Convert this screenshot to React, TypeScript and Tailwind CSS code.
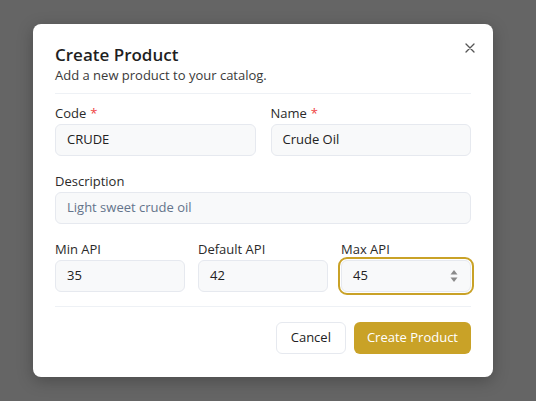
const field = 'h-8 rounded-md border border-[#e6e9ef] bg-[#f8f9fa] px-[11px] flex items-center text-[13px] text-[#222]';

function Label({ text, required }: { text: string; required?: boolean }) {
  return (
    <div className="h-[18px] leading-[18px] text-[13px] text-[#2a2a2a] mb-[2px]">
      {text}
      {required && <span className="text-[#ef4444] ml-1">*</span>}
    </div>
  );
}

export default function App() {
  return (
    <div
      className="w-[536px] h-[401px] bg-[#656565] pt-[24px] pl-[33px]"
      style={{ fontFamily: '"Open Sans", "Noto Sans", sans-serif' }}
    >
      <div className="relative w-[460px] h-[353px] rounded-lg bg-white shadow-[0_4px_16px_rgba(0,0,0,0.25)] px-[22px] pt-[20px]">
        <button className="absolute right-[13px] top-[14px] w-5 h-5 flex items-center justify-center text-[#555]">
          <svg width="10" height="10" viewBox="0 0 10 10" stroke="currentColor" strokeWidth="1.3" strokeLinecap="round">
            <path d="M1 1L9 9M9 1L1 9" />
          </svg>
        </button>

        <div className="pb-[9px] border-b border-[#eef1f5]">
          <h2 className="text-[17px] leading-[22px] font-semibold text-[#1f1f1f]">Create Product</h2>
          <p className="text-[13px] leading-[18px] text-[#3a3a3a]">Add a new product to your catalog.</p>
        </div>

        <div className="pt-[10px] pb-[14px] border-b border-[#eef1f5] flex flex-col gap-4">
          <div className="grid grid-cols-2 gap-[15px]">
            <div>
              <Label text="Code" required />
              <div className={field}>CRUDE</div>
            </div>
            <div>
              <Label text="Name" required />
              <div className={field}>Crude Oil</div>
            </div>
          </div>
          <div>
            <Label text="Description" />
            <div className={`${field} text-[#64748b]`}>Light sweet crude oil</div>
          </div>
          <div className="grid grid-cols-3 gap-[13px]">
            <div>
              <Label text="Min API" />
              <div className={field}>35</div>
            </div>
            <div>
              <Label text="Default API" />
              <div className={field}>42</div>
            </div>
            <div>
              <Label text="Max API" />
              <div className={`${field} justify-between pr-[12px] outline-2 outline-offset-[1px] outline-[#c9a227] outline`}>
                <span>45</span>
                <svg width="8" height="14" viewBox="0 0 8 14" fill="#8a8a8a">
                  <path d="M4 1L7.5 5.5H0.5Z" />
                  <path d="M4 13L7.5 8.5H0.5Z" />
                </svg>
              </div>
            </div>
          </div>
        </div>

        <div className="pt-[15px] flex justify-end gap-2">
          <button className="h-8 px-[14px] rounded-md border border-[#e6e9ef] bg-white text-[13px] text-[#222]">
            Cancel
          </button>
          <button className="h-8 px-[13px] rounded-md bg-[#c9a227] text-[13px] text-white font-medium">
            Create Product
          </button>
        </div>
      </div>
    </div>
  );
}
